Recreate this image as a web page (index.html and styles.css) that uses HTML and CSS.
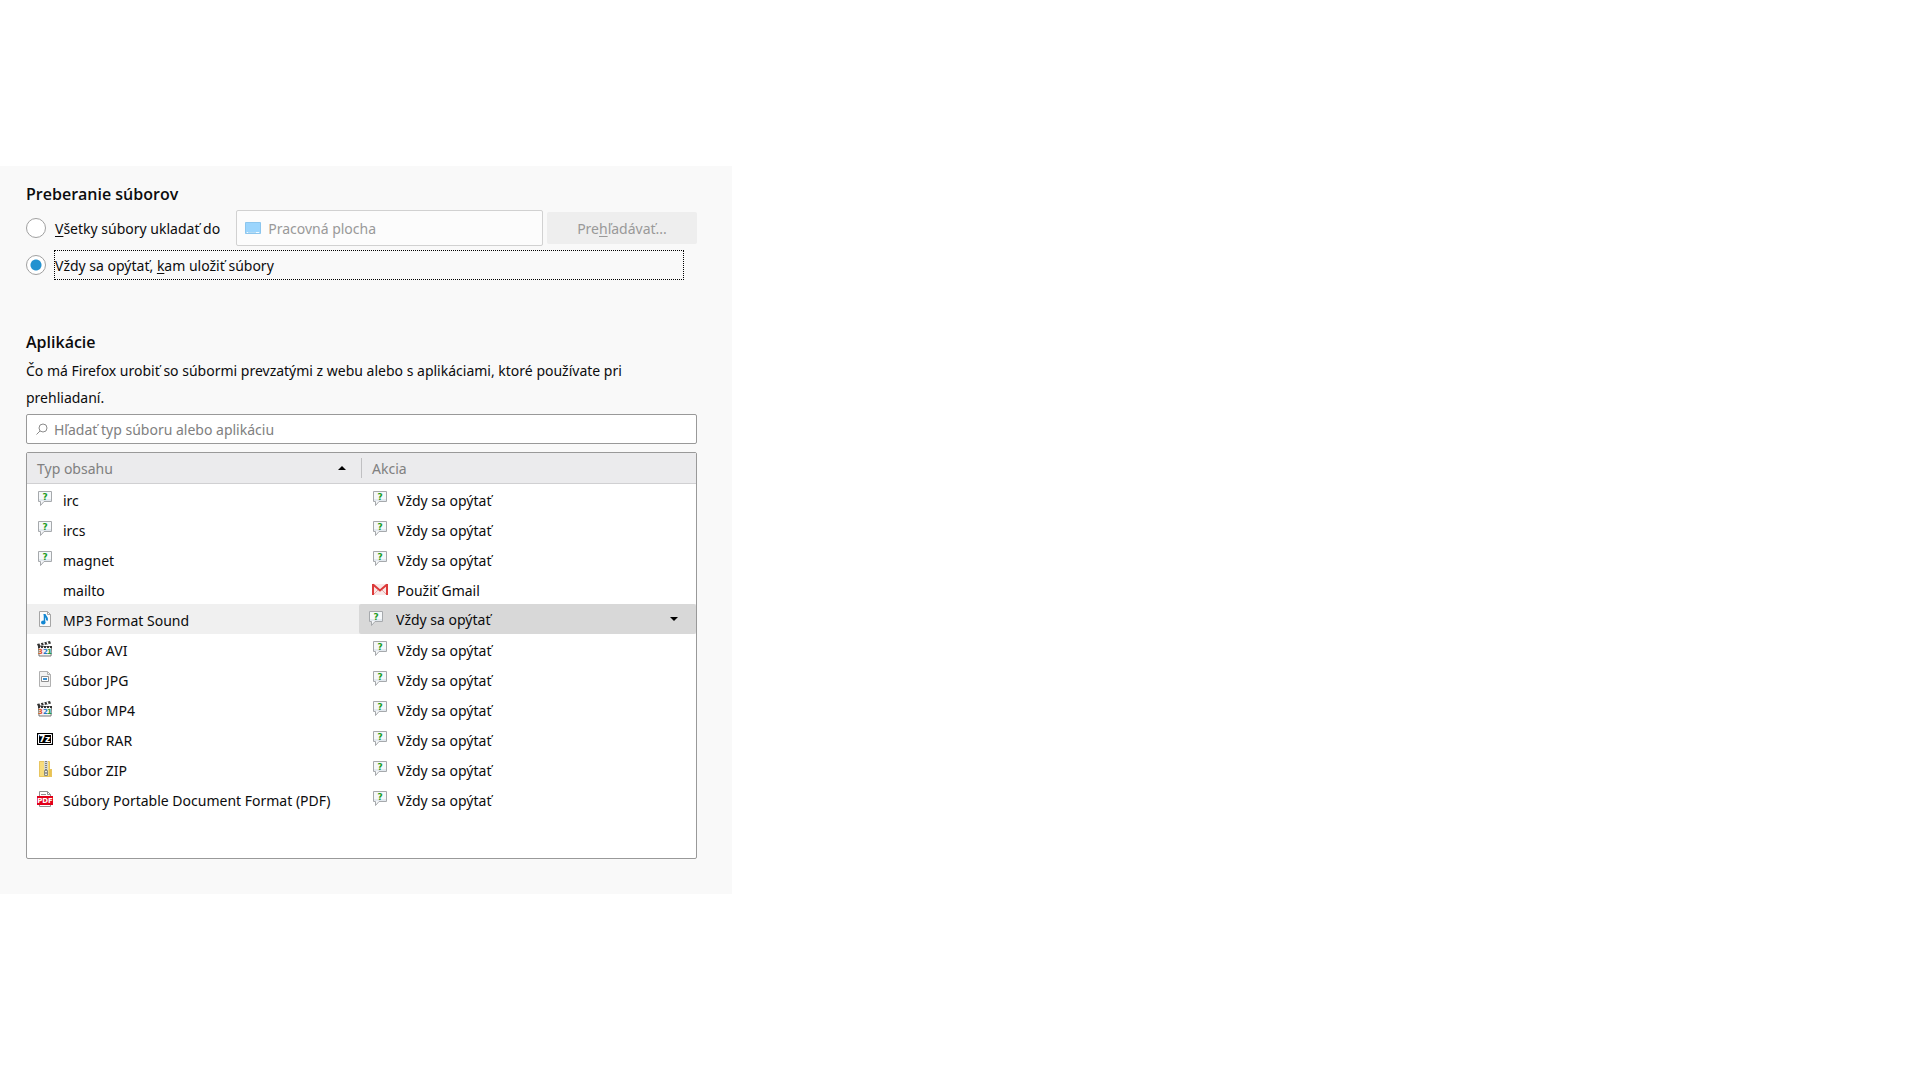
FILE: index.html
```html
<!DOCTYPE html>
<html lang="sk">
<head>
	<meta charset="utf-8">
	<title>Preberanie súborov a aplikácie</title>
	<link rel="stylesheet" href="styles.css">
</head>
<body>

<!-- Icon definitions -->
<svg class="icon-defs" aria-hidden="true">
	<symbol id="ask" viewBox="0 0 16 16">
		<path d="M1.500.5h13v10h-7.500l-3.500 4v-4h-2z" fill="#f6f8fa" stroke="#a6a9ac"/>
		<path d="M2 8h12v2h-12z" fill="#e2e8ee"/>
		<text x="8" y="9" text-anchor="middle" font-size="9" font-weight="bold" fill="#1f9e1f">?</text>
	</symbol>
	<symbol id="gmail" viewBox="0 0 16 16">
		<path d="M1 3h14v11h-14z" fill="#f9e8e8"/>
		<path d="M2 13l5-5M14 13l-5-5" stroke="#e9a5a2" fill="none"/>
		<path d="M1 3.500l7 6 7-6" fill="none" stroke="#dc3a3a" stroke-width="2"/>
		<path d="M0 3h2v11h-2zM14 3h2v11h-2z" fill="#dc3a3a"/>
	</symbol>
	<symbol id="sound" viewBox="0 0 16 16">
		<path d="M2.500.5h8l3 3v12h-11z" fill="#fbfbfb" stroke="#a5a5a5"/>
		<path d="M10.500.5v3h3" fill="none" stroke="#a5a5a5"/>
		<path d="M7.500 3v8" stroke="#1387d2" stroke-width="1.500"/>
		<path d="M7.500 3c0 2.500 3.500 3 2.500 6.500" fill="none" stroke="#1387d2" stroke-width="2"/>
		<ellipse cx="6.300" cy="11.500" rx="2.300" ry="2" fill="#1387d2"/>
	</symbol>
	<symbol id="video" viewBox="0 0 16 16">
		<path d="M1.500 5.500h13l-.5 9.500h-12z" fill="#f4f4f4" stroke="#777"/>
		<path d="M0 3l13-3 1 2.500-13 3z" fill="#333"/>
		<path d="M3 2l1 2.500M6.500 1.200l1 2.500M10 .5l1 2.500" stroke="#fff" stroke-width="1.500"/>
		<path d="M1 6h14" stroke="#333" stroke-width="2" stroke-dasharray="2 1"/>
		<g font-size="7" font-weight="bold">
			<text x="1" y="13" fill="#e0562a">3</text>
			<text x="6" y="13" fill="#2878c8">2</text>
			<text x="10" y="13" fill="#2d9a3c">1</text>
		</g>
	</symbol>
	<symbol id="picture" viewBox="0 0 16 16">
		<path d="M2.500.5h8l3 3v12h-11z" fill="#f3f3f3" stroke="#b0b0b0"/>
		<path d="M10.500.5v3h3" fill="none" stroke="#b0b0b0"/>
		<path d="M4.500 5.500h7v5h-7z" fill="#fff" stroke="#8f8f8f"/>
		<path d="M6 7h4v2h-4z" fill="#3a8fd0"/>
	</symbol>
	<symbol id="rar" viewBox="0 0 16 16">
		<path d="M0 2h16v12h-16z" fill="#000"/>
		<path d="M1.500 3.500h13v9h-13z" fill="#000" stroke="#fff"/>
		<g font-size="9" font-weight="bold" fill="#fff">
			<text x="2" y="11">7</text>
			<text x="8" y="11">z</text>
		</g>
	</symbol>
	<symbol id="zip" viewBox="0 0 16 16">
		<path d="M2 0h10v16h-10z" fill="#f8dc7c"/>
		<path d="M12 8h3v8h-3z" fill="#eac350"/>
		<path d="M2.500.5v15h12v-7h-2v-8z" fill="none" stroke="#e8c560"/>
		<path d="M7 0h4v9h-4z" fill="#d8d8d0"/>
		<path d="M9 0v9" stroke="#808080" stroke-width="2" stroke-dasharray="1 1"/>
		<path d="M7.500 9.500h3v5h-3z" fill="#e8e8e0" stroke="#8a8a80"/>
		<path d="M9 11v2" stroke="#555"/>
	</symbol>
	<symbol id="pdf" viewBox="0 0 16 16">
		<path d="M2.500.5h8l3 3v12h-11z" fill="#fff" stroke="#909090"/>
		<path d="M10.500.5v3h3M4 3.500h5" fill="none" stroke="#909090"/>
		<path d="M0 5h16v9h-16z" fill="#e2001a"/>
		<text x="8" y="12" text-anchor="middle" font-size="7" font-weight="bold" fill="#fff">PDF</text>
	</symbol>
	<symbol id="desktop" viewBox="0 0 16 16">
		<path d="M.5 2.500h15v11h-15z" fill="#9bd5fd" stroke="#8cc6ee"/>
		<path d="M1 12.500h14" stroke="#b5dcf5"/>
		<path d="M2 12.500h1M11 12.500h3" stroke="#f3fbff"/>
	</symbol>
	<symbol id="search" viewBox="0 0 12 12">
		<circle cx="7" cy="5" r="4" fill="none" stroke="#8c8c8c"/>
		<path d="M4 8l-3.500 3.500" stroke="#8c8c8c"/>
	</symbol>
</svg>

<main class="pane">
	<section class="downloads">
		<h2>Preberanie súborov</h2>
		<div class="save-row">
			<input type="radio" name="save" id="save-to">
			<label for="save-to"><u>V</u>šetky súbory ukladať do</label>
			<div class="folder">
				<svg class="icon"><use href="#desktop"/></svg>
				<input type="text" value="Pracovná plocha" aria-label="Priečinok" disabled>
			</div>
			<button type="button" class="browse" disabled>Pre<u>h</u>ľadávať...</button>
		</div>
		<div class="ask-row">
			<input type="radio" name="save" id="always-ask" checked>
			<label for="always-ask" class="focused">Vždy sa opýtať, <u>k</u>am uložiť súbory</label>
		</div>
	</section>

	<section class="applications">
		<h2>Aplikácie</h2>
		<p>Čo má Firefox urobiť so súbormi prevzatými z webu alebo s aplikáciami, ktoré používate pri prehliadaní.</p>
		<div class="search">
			<svg class="search-icon"><use href="#search"/></svg>
			<input type="text" placeholder="Hľadať typ súboru alebo aplikáciu" aria-label="Hľadať typ súboru alebo aplikáciu">
		</div>

		<div class="list">
			<table>
				<thead>
					<tr>
						<th class="type"><div class="head">Typ obsahu <svg class="arrow" viewBox="0 0 8 4"><path d="M0 4l4-4 4 4z"/></svg></div></th>
						<th class="action"><div class="head">Akcia</div></th>
					</tr>
				</thead>
				<tbody>
					<tr>
						<td><div class="cell"><svg class="icon"><use href="#ask"/></svg>irc</div></td>
						<td><div class="cell"><svg class="icon"><use href="#ask"/></svg>Vždy sa opýtať</div></td>
					</tr>
					<tr>
						<td><div class="cell"><svg class="icon"><use href="#ask"/></svg>ircs</div></td>
						<td><div class="cell"><svg class="icon"><use href="#ask"/></svg>Vždy sa opýtať</div></td>
					</tr>
					<tr>
						<td><div class="cell"><svg class="icon"><use href="#ask"/></svg>magnet</div></td>
						<td><div class="cell"><svg class="icon"><use href="#ask"/></svg>Vždy sa opýtať</div></td>
					</tr>
					<tr>
						<td><div class="cell"><svg class="icon"></svg>mailto</div></td>
						<td><div class="cell"><svg class="icon"><use href="#gmail"/></svg>Použiť Gmail</div></td>
					</tr>
					<tr class="selected">
						<td><div class="cell"><svg class="icon"><use href="#sound"/></svg>MP3 Format Sound</div></td>
						<td>
							<div class="menu">
								<select aria-label="Akcia pre MP3 Format Sound">
									<option>Vždy sa opýtať</option>
								</select>
								<svg class="icon"><use href="#ask"/></svg>
								<svg class="arrow" viewBox="0 0 8 4"><path d="M0 0h8l-4 4z"/></svg>
							</div>
						</td>
					</tr>
					<tr>
						<td><div class="cell"><svg class="icon"><use href="#video"/></svg>Súbor AVI</div></td>
						<td><div class="cell"><svg class="icon"><use href="#ask"/></svg>Vždy sa opýtať</div></td>
					</tr>
					<tr>
						<td><div class="cell"><svg class="icon"><use href="#picture"/></svg>Súbor JPG</div></td>
						<td><div class="cell"><svg class="icon"><use href="#ask"/></svg>Vždy sa opýtať</div></td>
					</tr>
					<tr>
						<td><div class="cell"><svg class="icon"><use href="#video"/></svg>Súbor MP4</div></td>
						<td><div class="cell"><svg class="icon"><use href="#ask"/></svg>Vždy sa opýtať</div></td>
					</tr>
					<tr>
						<td><div class="cell"><svg class="icon"><use href="#rar"/></svg>Súbor RAR</div></td>
						<td><div class="cell"><svg class="icon"><use href="#ask"/></svg>Vždy sa opýtať</div></td>
					</tr>
					<tr>
						<td><div class="cell"><svg class="icon"><use href="#zip"/></svg>Súbor ZIP</div></td>
						<td><div class="cell"><svg class="icon"><use href="#ask"/></svg>Vždy sa opýtať</div></td>
					</tr>
					<tr>
						<td><div class="cell"><svg class="icon"><use href="#pdf"/></svg>Súbory Portable Document Format (PDF)</div></td>
						<td><div class="cell"><svg class="icon"><use href="#ask"/></svg>Vždy sa opýtať</div></td>
					</tr>
				</tbody>
			</table>
		</div>
	</section>
</main>

</body>
</html>
```
FILE: styles.css
```css
* {
	box-sizing: border-box;
}

body {
	margin: 0;
	padding: 166px 0;
	background: #fff;
	color: #0c0c0d;
	font: 14px/22px "Noto Sans", "Open Sans", sans-serif;
}

input,
select,
button {
	margin: 0;
	font: inherit;
	color: inherit;
}

u {
	text-underline-offset: 2px;
}

.icon-defs {
	display: none;
}

.icon-defs text {
	font-family: "DejaVu Sans", sans-serif;
}

.icon {
	flex: none;
	width: 16px;
	height: 16px;
}

.arrow {
	flex: none;
	width: 8px;
	height: 4px;
}

.pane {
	max-width: 732px;
	padding: 16px 35px 35px 26px;
	background: #f9f9f9;
}

h2 {
	margin: 0;
	font-family: "Open Sans", "Noto Sans", sans-serif;
	font-size: 16px;
	font-weight: 600;
	line-height: 24px;
}

/* Downloads */
.save-row,
.ask-row {
	display: flex;
	align-items: center;
	margin-top: 4px;
}

.ask-row {
	padding-right: 13px;
}

input[type="radio"] {
	flex: none;
	appearance: none;
	width: 20px;
	height: 20px;
	margin-right: 8px;
	border: 1px solid #a0a0a0;
	border-radius: 50%;
	background: #fff;
}

input[type="radio"]:checked {
	background: radial-gradient(circle, #2292d0 5px, #fff 6px);
}

.save-row label {
	margin-right: 16px;
	padding: 2px 0 0 1px;
	white-space: nowrap;
}

.focused {
	flex: 1;
	padding: 4px 0 2px;
	border: 1px dotted #000;
}

.folder {
	display: flex;
	flex: 1;
	align-items: center;
	min-width: 0;
	height: 36px;
	padding: 0 8px;
	border: 1px solid #d1d1d1;
	border-radius: 2px;
	background: #fcfcfc;
}

.folder input {
	flex: 1;
	min-width: 0;
	padding: 2px 7px 0;
	border: 0;
	background: none;
	color: #999;
}

.browse {
	flex: none;
	width: 150px;
	height: 32px;
	margin-left: 4px;
	padding: 2px 0 0;
	border: 0;
	border-radius: 2px;
	background: #eee;
	color: #999;
}

/* Applications */
.applications {
	margin-top: 50px;
}

p {
	margin: 3px 0;
	line-height: 27px;
}

.search {
	display: flex;
	align-items: center;
	height: 30px;
	padding: 0 9px;
	border: 1px solid #999;
	border-radius: 2px;
	background: #fff;
}

.search-icon {
	flex: none;
	width: 12px;
	height: 12px;
}

.search input {
	flex: 1;
	padding: 2px 6px 0;
	border: 0;
	outline: 0;
	background: none;
}

.search input::placeholder {
	color: #808080;
	opacity: 1;
}

.list {
	margin-top: 8px;
	padding-bottom: 44px;
	border: 1px solid #999;
	border-radius: 2px;
	background: #fff;
}

table {
	width: 100%;
	border-spacing: 0;
	table-layout: fixed;
}

th,
td {
	padding: 0;
}

th {
	height: 31px;
	border-bottom: 1px solid #d0d0d2;
	background: #ebebed;
	color: #808080;
	font-weight: normal;
	text-align: left;
}

.type {
	width: 332px;
}

.head {
	display: flex;
	align-items: center;
	justify-content: space-between;
	height: 20px;
	padding: 2px 13px 0 10px;
}

.head .arrow {
	margin-bottom: 2px;
}

.action .head {
	margin-left: 2px;
	border-left: 1px solid #c0c0c2;
}

.cell {
	display: flex;
	align-items: center;
	gap: 10px;
	height: 30px;
	padding: 4px 0 0 10px;
	white-space: nowrap;
}

.cell .icon {
	margin-bottom: 4px;
}

td + td .cell {
	gap: 9px;
	padding-left: 13px;
}

.selected {
	background: #f0f0f0;
}

/* Action menu of the selected row */
.menu {
	position: relative;
	display: flex;
	align-items: center;
}

.menu select {
	flex: 1;
	appearance: none;
	height: 30px;
	padding: 1px 32px 0 37px;
	border: 0;
	border-radius: 2px;
	background: #d8d8d8;
}

.menu svg {
	position: absolute;
	pointer-events: none;
}

.menu .icon {
	left: 9px;
}

.menu .arrow {
	right: 18px;
}
```
